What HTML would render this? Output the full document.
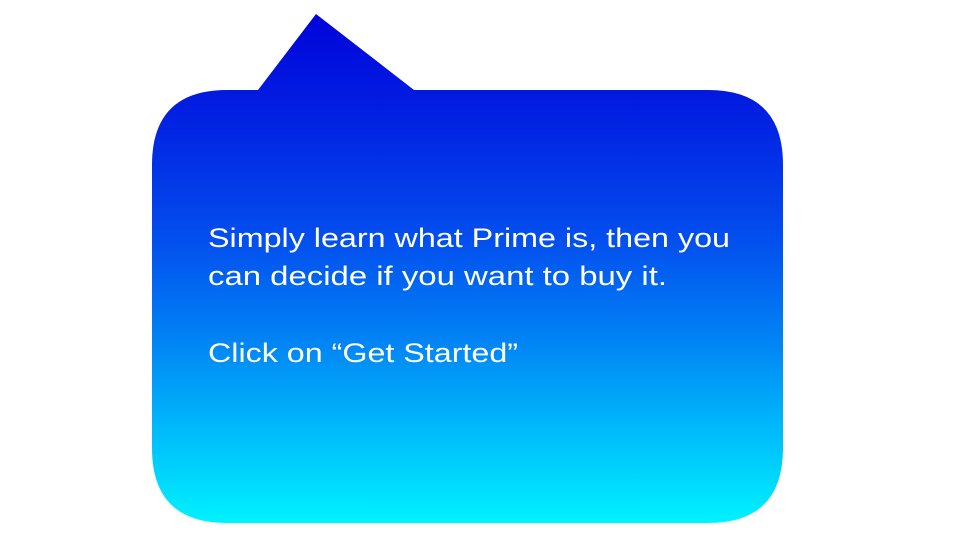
<!DOCTYPE html>
<html><head><meta charset="utf-8"><style>
html,body{margin:0;padding:0;background:#fff;width:960px;height:540px;overflow:hidden}
</style></head><body>
<svg width="960" height="540" viewBox="0 0 960 540" xmlns="http://www.w3.org/2000/svg">
<defs>
<linearGradient id="g" x1="0" y1="14" x2="0" y2="523" gradientUnits="userSpaceOnUse">
<stop offset="0" stop-color="#0004da"/>
<stop offset="0.2" stop-color="#0220e2"/>
<stop offset="0.45" stop-color="#0350ee"/>
<stop offset="0.65" stop-color="#0186f5"/>
<stop offset="0.85" stop-color="#00c4fb"/>
<stop offset="1" stop-color="#00f2ff"/>
</linearGradient>
</defs>
<path fill="url(#g)" d="M258 90 L316 14 L414 90 L708 90 Q783 90 783 165 L783 448 Q783 523 708 523 L227 523 Q152 523 152 448 L152 165 Q152 90 227 90 Z"/>
<g fill="#fff" font-family="Liberation Sans, sans-serif" font-size="27">
<text x="208" y="247" textLength="522" lengthAdjust="spacingAndGlyphs">Simply learn what Prime is, then you</text>
<text x="208" y="285" textLength="459" lengthAdjust="spacingAndGlyphs">can decide if you want to buy it.</text>
<text x="208" y="362" textLength="310" lengthAdjust="spacingAndGlyphs">Click on “Get Started”</text>
</g>
</svg>
</body></html>
